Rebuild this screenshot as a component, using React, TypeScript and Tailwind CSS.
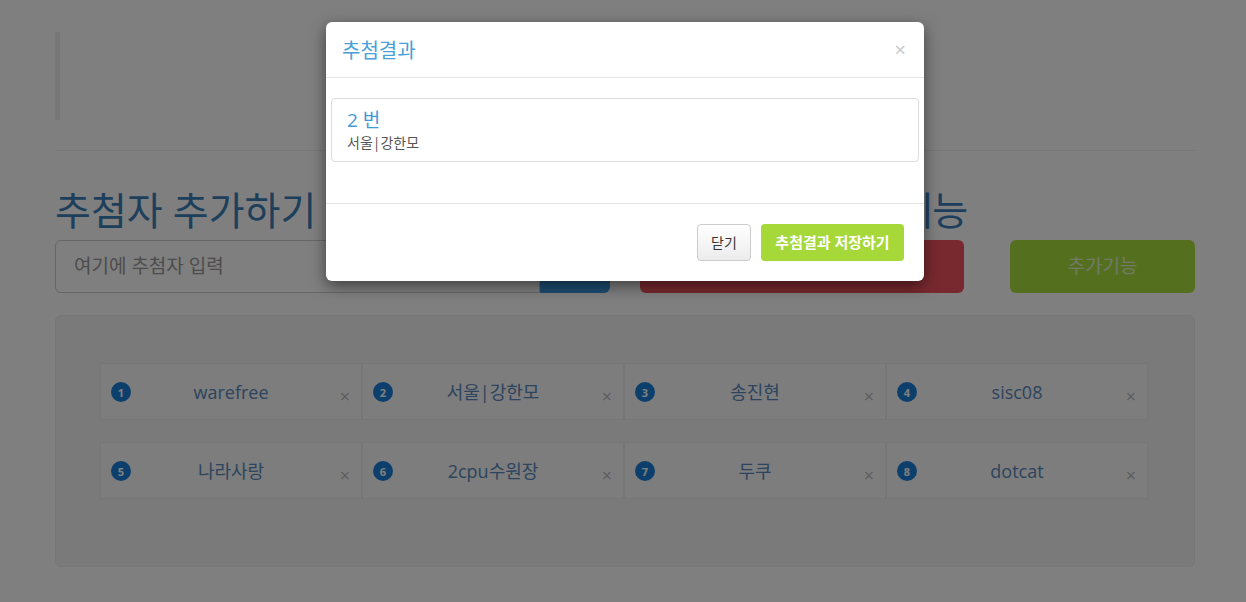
import React from 'react';

const items = [
  { no: 1, name: 'warefree' },
  { no: 2, name: '서울|강한모' },
  { no: 3, name: '송진현' },
  { no: 4, name: 'sisc08' },
  { no: 5, name: '나라사랑' },
  { no: 6, name: '2cpu수원장' },
  { no: 7, name: '두쿠' },
  { no: 8, name: 'dotcat' },
];

const font = 'font-["Open_Sans","Noto_Sans_CJK_KR",sans-serif]';

const Item: React.FC<{ no: number; name: string }> = ({ no, name }) => (
  <div className="relative flex h-[57px] w-[262px] items-center justify-center border border-[#ececec] bg-[#fafafa]">
    <span className="absolute left-[10px] top-[18px] flex h-[20px] w-[20px] items-center justify-center rounded-full bg-[#1a7fd8] text-[11px] font-bold leading-none text-white">
      {no}
    </span>
    <span className="text-[18px] leading-none text-[#5a88bc]">{name}</span>
    <span className="absolute right-[11px] top-[23px] text-[18px] leading-none text-[#bbb]">×</span>
  </div>
);

export default function App() {
  return (
    <div className={`relative h-[602px] overflow-hidden bg-white ${font}`}>
      {/* page */}
      <div className="ml-[55px] w-[1140px] pt-[32px]">
        <div className="h-[88px] border-l-[5px] border-[#eee]" />
        <hr className="mt-[30px] border-t border-[#eee]" />

        <div className="mt-[36px] flex">
          <div className="w-[555px]">
            <h1 className="text-[39px] leading-[45px] text-[#3d7fb8]">추첨자 추가하기</h1>
            <div className="mt-[8px] flex h-[53px]">
              <input
                placeholder="여기에 추첨자 입력"
                className="w-[485px] rounded-l-md border border-[#ccc] px-[18px] text-[19px] text-[#555] placeholder:text-[#999]"
              />
              <button className="w-[70px] rounded-r-md bg-[#3a98e0] text-[18px] text-white">추가</button>
            </div>
          </div>
          <div className="ml-[30px] flex-1">
            <h1 className="text-[39px] leading-[45px] tracking-[-1.5px] text-[#3d7fb8]">추첨하기 및 추가기능</h1>
            <div className="mt-[8px] flex h-[53px] gap-[46px]">
              <button className="w-[324px] rounded-md bg-[#f0525e] text-[18px] text-white">추첨하기</button>
              <button className="w-[185px] rounded-md bg-[#a8e03c] text-[19px] text-[#e6f2cf]">추가기능</button>
            </div>
          </div>
        </div>

        <div className="mt-[22px] h-[252px] rounded-md border border-[#ececec] bg-[#f5f5f5] px-[44px] pt-[47px]">
          <div className="flex flex-col gap-[22px]">
            <div className="flex">
              {items.slice(0, 4).map((it) => (
                <Item key={it.no} {...it} />
              ))}
            </div>
            <div className="flex">
              {items.slice(4).map((it) => (
                <Item key={it.no} {...it} />
              ))}
            </div>
          </div>
        </div>
      </div>

      {/* backdrop */}
      <div className="absolute inset-0 bg-black/50" />

      {/* modal */}
      <div className="absolute left-[326px] top-[22px] w-[598px] rounded-md bg-white shadow-[0_5px_15px_rgba(0,0,0,0.5)]">
        <div className="flex h-[56px] items-center justify-between border-b border-[#e5e5e5] pl-[16px] pr-[18px]">
          <h4 className="pt-[2px] text-[20px] leading-none text-[#4aa0d8]">추첨결과</h4>
          <span className="text-[20px] leading-none text-[#c8c8c8]">×</span>
        </div>
        <div className="h-[125px] px-[5px] pt-[20px]">
          <div className="h-[64px] rounded border border-[#ddd] px-[15px] pt-[8px]">
            <div className="text-[19px] leading-[26px] text-[#3f9ad8]">2 번</div>
            <div className="text-[14px] leading-[20px] text-[#555]">서울|강한모</div>
          </div>
        </div>
        <div className="flex h-[78px] items-center justify-end gap-[10px] border-t border-[#e5e5e5] pr-[20px]">
          <button className="h-[37px] w-[54px] rounded border border-[#ccc] bg-gradient-to-b from-white to-[#ececec] text-[14px] text-[#333]">
            닫기
          </button>
          <button className="h-[37px] w-[143px] rounded bg-[#a6d83a] text-[15px] font-bold text-white">
            추첨결과 저장하기
          </button>
        </div>
      </div>
    </div>
  );
}
